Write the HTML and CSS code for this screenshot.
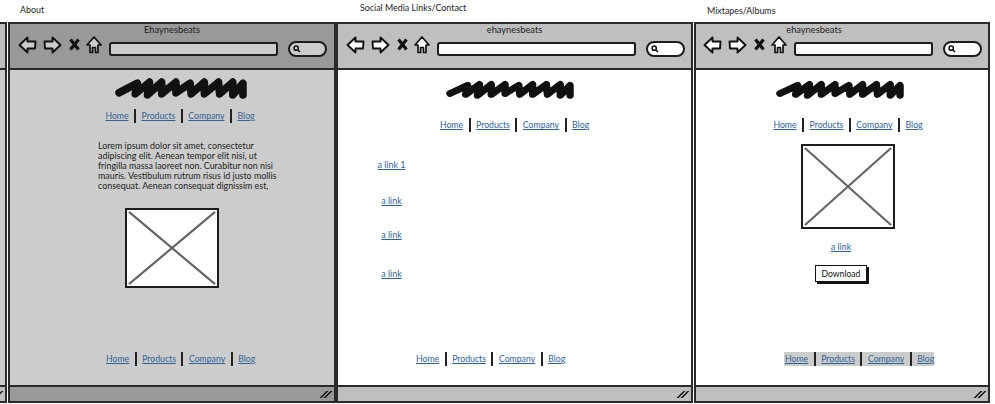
FILE: index.html
```html
<!DOCTYPE html>
<html lang="en">
<head>
<meta charset="utf-8">
<title>Wireframes</title>
<link rel="stylesheet" href="styles.css">
</head>
<body>
<svg class="defs" width="0" height="0" aria-hidden="true">
  <symbol id="back" viewBox="0 0 19 18"><path d="M1.5 9 9.5 1.5V5.5H17.5L17 12.5H9.5V16.5Z" fill="var(--field)" stroke="#111" stroke-width="1.9" stroke-linejoin="round"/></symbol>
  <symbol id="fwd" viewBox="0 0 19 18"><path d="M17.5 9 9.5 1.5V5.5H1.5L2 12.5H9.5V16.5Z" fill="var(--field)" stroke="#111" stroke-width="1.9" stroke-linejoin="round"/></symbol>
  <symbol id="stop" viewBox="0 0 11 13"><path d="M1.5 1.5 9.5 11.5M9.5 1.5 1.5 11.5" fill="none" stroke="#111" stroke-width="3.2"/></symbol>
  <symbol id="home" viewBox="0 0 16 18"><path d="M8 1 15 9H12V16.5H9.5V11.5H6.5V16.5H4V9H1Z" fill="var(--field)" stroke="#111" stroke-width="1.7" stroke-linejoin="round"/></symbol>
  <symbol id="lens" viewBox="0 0 8 8"><circle cx="3.2" cy="3.2" r="2.1" fill="none" stroke="#111" stroke-width="1.5"/><path d="M4.8 4.8 7 7" stroke="#111" stroke-width="1.6"/></symbol>
  <symbol id="scribble" viewBox="0 0 130 22" preserveAspectRatio="none"><path d="M4 16 22 7 20 17 34 6 32 18 46 6 46 17 60 6 60 16 74 7 75 17 88 6 88 17 102 6 103 17 116 6 116 18 126 7 126 18" fill="none" stroke="#111" stroke-width="7.5" stroke-linecap="round" stroke-linejoin="round"/></symbol>
  <symbol id="cross" viewBox="0 0 92 80" preserveAspectRatio="none"><path d="M2 2 90 78M90 2 2 78" stroke="#666" stroke-width="2.2" vector-effect="non-scaling-stroke"/></symbol>
</svg>

<div class="desktop">
  <p class="caption caption-about">About</p>
  <p class="caption caption-social">Social Media Links/Contact</p>
  <p class="caption caption-mix">Mixtapes/Albums</p>

  <section class="window window-stub">
    <header class="toolbar"></header>
    <main class="page"></main>
    <footer class="status"><span class="grip"><i></i><i></i></span></footer>
  </section>

  <section class="window window-about">
    <header class="toolbar">
      <div class="title">Ehaynesbeats</div>
      <div class="controls">
        <svg class="ico-back"><use href="#back"/></svg>
        <svg class="ico-fwd"><use href="#fwd"/></svg>
        <svg class="ico-stop"><use href="#stop"/></svg>
        <svg class="ico-home"><use href="#home"/></svg>
        <div class="url"></div>
        <div class="search"><svg class="ico-lens"><use href="#lens"/></svg></div>
      </div>
    </header>
    <main class="page">
      <svg class="logo"><use href="#scribble"/></svg>
      <nav class="nav"><a>Home</a><a>Products</a><a>Company</a><a>Blog</a></nav>
      <p class="lorem">Lorem ipsum dolor sit amet, consectetur adipiscing elit. Aenean tempor elit nisi, ut fringilla massa laoreet non. Curabitur non nisi mauris. Vestibulum rutrum risus id justo mollis consequat. Aenean consequat dignissim est,</p>
      <div class="placeholder"><svg><use href="#cross"/></svg></div>
      <nav class="nav nav-foot"><a>Home</a><a>Products</a><a>Company</a><a>Blog</a></nav>
    </main>
    <footer class="status"><span class="grip"><i></i><i></i></span></footer>
  </section>

  <section class="window window-social">
    <header class="toolbar">
      <div class="title">ehaynesbeats</div>
      <div class="controls">
        <svg class="ico-back"><use href="#back"/></svg>
        <svg class="ico-fwd"><use href="#fwd"/></svg>
        <svg class="ico-stop"><use href="#stop"/></svg>
        <svg class="ico-home"><use href="#home"/></svg>
        <div class="url"></div>
        <div class="search"><svg class="ico-lens"><use href="#lens"/></svg></div>
      </div>
    </header>
    <main class="page">
      <svg class="logo"><use href="#scribble"/></svg>
      <nav class="nav"><a>Home</a><a>Products</a><a>Company</a><a>Blog</a></nav>
      <ul class="links">
        <li><a>a link 1</a></li>
        <li><a>a link</a></li>
        <li><a>a link</a></li>
        <li><a>a link</a></li>
      </ul>
      <nav class="nav nav-foot"><a>Home</a><a>Products</a><a>Company</a><a>Blog</a></nav>
    </main>
    <footer class="status"><span class="grip"><i></i><i></i></span></footer>
  </section>

  <section class="window window-mix">
    <header class="toolbar">
      <div class="title">ehaynesbeats</div>
      <div class="controls">
        <svg class="ico-back"><use href="#back"/></svg>
        <svg class="ico-fwd"><use href="#fwd"/></svg>
        <svg class="ico-stop"><use href="#stop"/></svg>
        <svg class="ico-home"><use href="#home"/></svg>
        <div class="url"></div>
        <div class="search"><svg class="ico-lens"><use href="#lens"/></svg></div>
      </div>
    </header>
    <main class="page">
      <svg class="logo"><use href="#scribble"/></svg>
      <nav class="nav"><a>Home</a><a>Products</a><a>Company</a><a>Blog</a></nav>
      <div class="placeholder"><svg><use href="#cross"/></svg></div>
      <a class="album-link">a link</a>
      <button class="download" type="button">Download</button>
      <nav class="nav nav-foot"><a>Home</a><a>Products</a><a>Company</a><a>Blog</a></nav>
    </main>
    <footer class="status"><span class="grip"><i></i><i></i></span></footer>
  </section>
</div>
</body>
</html>
```

FILE: styles.css
```css
* { box-sizing: border-box; }

html, body {
  margin: 0;
  height: 100%;
  background: #fff;
  overflow: hidden;
}

body {
  font-family: "Lato", "Liberation Sans", sans-serif;
  font-size: 9px;
  color: #222;
}

.defs { position: absolute; }

.desktop {
  position: relative;
  width: 995px;
  height: 404px;
}

.caption {
  position: absolute;
  margin: 0;
  font-size: 8.9px;
  line-height: 12px;
  color: #222;
}
.caption-about { left: 20px; top: 4px; }
.caption-social { left: 360px; top: 2px; }
.caption-mix { left: 707px; top: 5px; }

/* Windows */
.window {
  --bar: #bfbfbf;
  --field: #fff;
  --paper: #fff;
  position: absolute;
  top: 22px;
  height: 381px;
  display: flex;
  flex-direction: column;
  border: 2px solid #2a2a2a;
  background: var(--paper);
}
.window-stub {
  --paper: #ccc;
  left: -40px;
  width: 47px;
}
.window-about {
  --bar: #999;
  --field: #ccc;
  --paper: #ccc;
  left: 8px;
  width: 328px;
}
.window-social { left: 336px; width: 357px; }
.window-mix { left: 694px; width: 296px; }

.toolbar {
  flex: none;
  height: 46px;
  background: var(--bar);
  border-bottom: 2px solid #2a2a2a;
}
.title {
  height: 12px;
  font-size: 9.3px;
  line-height: 12px;
  text-align: center;
}
.window-mix .title { padding-right: 56px; }

.controls {
  display: flex;
  align-items: flex-start;
  padding-left: 8px;
  height: 30px;
}
.window-mix .controls { padding-left: 7px; }
.ico-back, .ico-fwd { width: 19px; height: 18px; flex: none; }
.ico-fwd { margin-left: 6px; }
.ico-stop { width: 11px; height: 13px; margin: 2px 0 0 7px; flex: none; }
.ico-home { width: 16px; height: 18px; margin-left: 6px; flex: none; }

.url {
  height: 14px;
  margin: 6px 0 0 7px;
  border: 2px solid #1c1c1c;
  border-radius: 3px 2px 3px 3px;
  background: var(--field);
}
.window-about .url { width: 169px; }
.window-social .url { width: 199px; }
.window-mix .url { width: 139px; }

.search {
  display: flex;
  align-items: center;
  width: 39px;
  height: 16px;
  margin: 5px 0 0 10px;
  padding-left: 3px;
  border: 2px solid #1c1c1c;
  border-radius: 8px;
  background: var(--field);
}
.ico-lens { width: 8px; height: 8px; }

/* Page */
.page {
  flex: 1;
  position: relative;
  display: flex;
  flex-direction: column;
  align-items: center;
  background: var(--paper);
}

.logo { width: 132px; height: 23px; flex: none; margin: 6px 0 0 18px; }
.window-social .logo,
.window-mix .logo { width: 128px; height: 20px; margin-top: 9px; }
.window-social .logo { margin-left: 0; margin-right: 10px; }
.window-mix .logo { margin-left: 0; margin-right: 4px; }

a {
  color: #2f6294;
  text-decoration: underline;
}

.nav {
  display: flex;
  align-items: center;
  height: 14px;
  font-size: 8.7px;
  line-height: 14px;
  flex: none;
  margin: 10px 0 0 16px;
}
.nav a { padding: 0 5.5px; border-left: 2px solid #222; }
.nav a:first-child { border-left: 0; }

.window-social .nav { margin: 19px 0 0 0; }
.window-mix .nav { margin: 19px 0 0 12px; }

.nav-foot,
.window-social .nav-foot,
.window-mix .nav-foot { position: absolute; top: 282px; margin: 0; }
.window-about .nav-foot { left: 90.5px; }
.window-social .nav-foot { left: 72.5px; }
.window-mix .nav-foot {
  left: 88px;
  background: #ccc;
}
.window-mix .nav-foot a:first-child { padding-left: 1px; }
.window-mix .nav-foot a:last-child { padding-right: 0; }

.lorem {
  width: 186px;
  margin: 18px 0 0 38px;
  font-size: 8.9px;
  line-height: 10px;
}

.placeholder {
  width: 94px;
  height: 80px;
  flex: none;
  margin-top: 17px;
  background: #fff;
  border: 2px solid #1c1c1c;
}
.placeholder svg { display: block; width: 100%; height: 100%; background: #fff; }
.window-about .placeholder { margin-right: 1px; }
.window-mix .placeholder {
  height: 85px;
  margin: 12px 0 0 12px;
}

.links {
  list-style: none;
  align-self: flex-start;
  margin: 27px 0 0 38px;
  padding: 0;
  width: 31px;
  font-size: 8.9px;
  line-height: 12px;
  text-align: center;
}
.links li { white-space: nowrap; margin-bottom: 24px; }
.links li:nth-child(2) { margin-bottom: 22px; }
.links li:nth-child(3) { margin-bottom: 27px; }

.album-link {
  margin: 12px 2px 0 0;
  font-size: 8.9px;
  line-height: 12px;
}

.download {
  width: 52px;
  height: 17px;
  margin: 12px 2px 0 0;
  padding: 0;
  background: #fff;
  border: 1.5px solid #111;
  box-shadow: 2px 2px 0 #111;
  font: 8.6px "Lato", "Liberation Sans", sans-serif;
  color: #111;
}

/* Status bar */
.status {
  flex: none;
  display: flex;
  justify-content: flex-end;
  align-items: center;
  height: 16px;
  background: var(--bar);
  border-top: 2px solid #2a2a2a;
  padding-right: 3px;
}
.grip { display: flex; gap: 2px; transform: skewX(-45deg); margin-right: 2px; }
.grip i { display: block; width: 2px; height: 7px; background: #111; }
```
